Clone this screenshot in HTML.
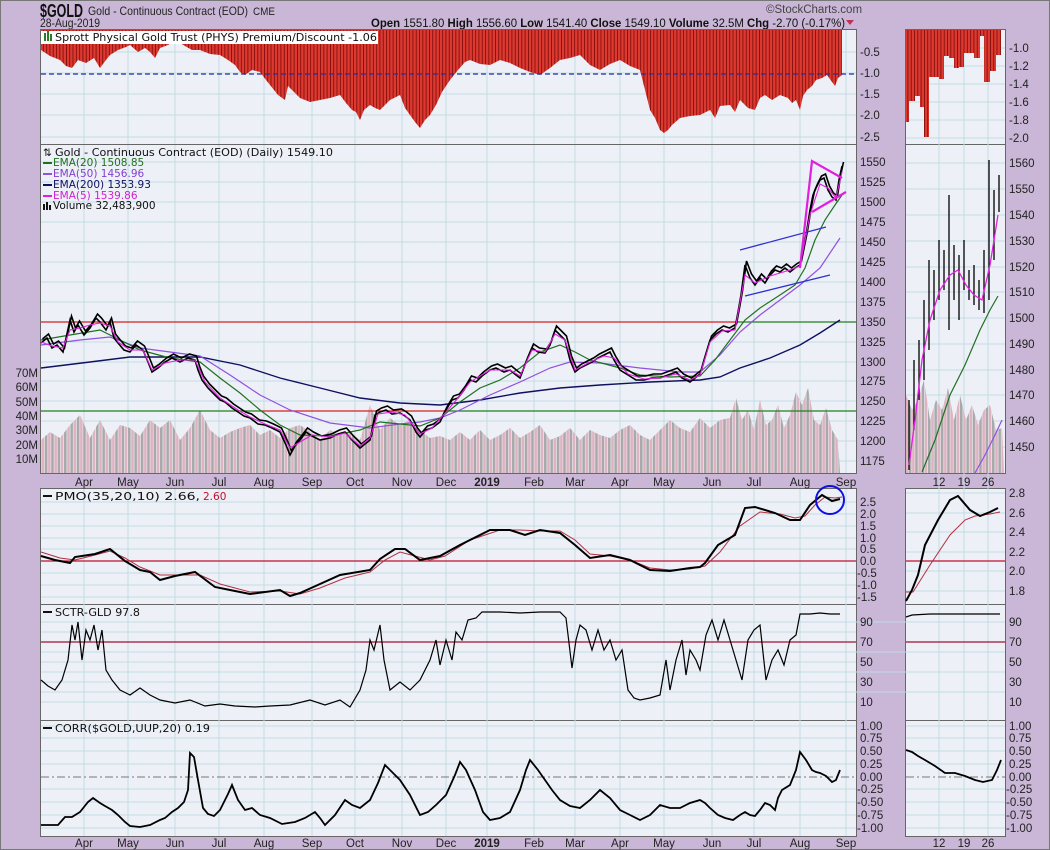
<!DOCTYPE html>
<html><head><meta charset="utf-8"><style>
html,body{margin:0;padding:0;background:#cab7d7;}
svg{display:block;font-family:"Liberation Sans","DejaVu Sans",sans-serif;}
.ax{font-size:11.5px;fill:#222;}
.lg{font-family:"DejaVu Sans",sans-serif;font-size:10.5px;}
</style></head><body>
<svg width="1050" height="850" viewBox="0 0 1050 850" xmlns="http://www.w3.org/2000/svg">
<defs>
<pattern id="red" width="3.3" height="10" patternUnits="userSpaceOnUse"><rect width="3.3" height="10" fill="#dc3a31"/><rect width="0.8" height="10" fill="#7a0808"/></pattern>
<pattern id="vol" width="6.4" height="10" patternUnits="userSpaceOnUse"><rect width="6.4" height="10" fill="#eef0f7"/><rect x="0" width="2.6" height="10" fill="#a9a9ab"/><rect x="3.2" width="2.6" height="10" fill="#dfb2bf"/></pattern>
</defs>
<rect x="0" y="0" width="1050" height="850" fill="#cab7d7"/>
<rect x="0.5" y="0.5" width="1049" height="849" fill="none" stroke="#777" />

<!-- header -->
<text x="40" y="17" font-size="18" font-weight="bold" fill="#111" textLength="43" lengthAdjust="spacingAndGlyphs">$GOLD</text>
<text x="88" y="15" font-size="12" fill="#222" textLength="160" lengthAdjust="spacingAndGlyphs">Gold - Continuous Contract (EOD)</text>
<text x="253" y="15" font-size="11" fill="#222" textLength="22" lengthAdjust="spacingAndGlyphs">CME</text>
<text x="40" y="27" font-size="11.5" fill="#222" textLength="60" lengthAdjust="spacingAndGlyphs">28-Aug-2019</text>
<text x="766" y="13" font-size="11.5" fill="#444">©StockCharts.com</text>
<text x="371" y="27" font-size="11.5" fill="#111" textLength="474" lengthAdjust="spacingAndGlyphs"><tspan font-weight="bold">Open</tspan> 1551.80 <tspan font-weight="bold">High</tspan> 1556.60 <tspan font-weight="bold">Low</tspan> 1541.40 <tspan font-weight="bold">Close</tspan> 1549.10 <tspan font-weight="bold">Volume</tspan> 32.5M <tspan font-weight="bold">Chg</tspan> -2.70 (-0.17%)</text>
<polygon points="846,20 854,20 850,25" fill="#c03050"/>

<!-- panel backgrounds -->
<g fill="#eef0f7" stroke="#666" stroke-width="1">
<rect x="40.5" y="29.5" width="816" height="115"/>
<rect x="40.5" y="144.5" width="816" height="329"/>
<rect x="40.5" y="488.5" width="816" height="116"/>
<rect x="40.5" y="604.5" width="816" height="116"/>
<rect x="40.5" y="720.5" width="816" height="116"/>
<rect x="905.5" y="29.5" width="100" height="115"/>
<rect x="905.5" y="144.5" width="100" height="329"/>
<rect x="905.5" y="488.5" width="100" height="116"/>
<rect x="905.5" y="604.5" width="100" height="116"/>
<rect x="905.5" y="720.5" width="100" height="116"/>
</g>

<!-- vertical grid -->
<g stroke="#c3dbe6" stroke-width="1">
<path d="M84 30V144M128 30V144M175 30V144M219 30V144M264 30V144M312 30V144M355 30V144M402 30V144M446 30V144M487 30V144M534 30V144M575 30V144M620 30V144M664 30V144M712 30V144M754 30V144M800 30V144M846 30V144"/>
<path d="M84 145V473M128 145V473M175 145V473M219 145V473M264 145V473M312 145V473M355 145V473M402 145V473M446 145V473M487 145V473M534 145V473M575 145V473M620 145V473M664 145V473M712 145V473M754 145V473M800 145V473M846 145V473"/>
<path d="M84 489V836M128 489V836M175 489V836M219 489V836M264 489V836M312 489V836M355 489V836M402 489V836M446 489V836M487 489V836M534 489V836M575 489V836M620 489V836M664 489V836M712 489V836M754 489V836M800 489V836M846 489V836"/>
<path d="M939 30V836M964 30V836M988 30V836"/>
<path d="M41 52H856M41 73H856M41 94H856M41 115H856M41 137H856M906 48H1005M906 66H1005M906 84H1005M906 102H1005M906 120H1005M906 138H1005"/>
<path d="M41 162H856M41 182H856M41 202H856M41 222H856M41 242H856M41 262H856M41 282H856M41 302H856M41 322H856M41 342H856M41 362H856M41 381H856M41 401H856M41 421H856M41 441H856M41 461H856"/>
<path d="M906 163H1005M906 189H1005M906 215H1005M906 241H1005M906 267H1005M906 292H1005M906 318H1005M906 344H1005M906 370H1005M906 395H1005M906 421H1005M906 447H1005"/>
<path d="M41 502H856M41 514H856M41 526H856M41 538H856M41 549H856M41 573H856M41 585H856M41 597H856M906 493H1005M906 513H1005M906 532H1005M906 552H1005M906 571H1005M906 591H1005"/>
<path d="M41 622H1005M41 632H856M41 652H1005M41 662H856M41 672H1005M41 682H856M41 692H1005M41 702H856"/>
<path d="M41 726H856M41 738H856M41 751H856M41 764H856M41 789H856M41 802H856M41 815H856M41 828H856M906 726H1005M906 738H1005M906 751H1005M906 764H1005M906 789H1005M906 802H1005M906 815H1005M906 828H1005"/>
</g>

<!-- PHYS histogram -->
<polygon fill="url(#red)" points="41,30 41,50 50,56 60,60 66,66 72,68 78,60 86,63 94,58 100,68 106,60 110,55 118,50 126,47 130,45 138,52 145,48 150,52 155,58 160,48 168,45 175,40 185,46 192,50 200,50 210,54 220,55 228,60 235,65 240,72 245,75 252,70 260,72 266,80 270,85 278,95 285,100 288,86 292,90 300,98 310,102 320,100 330,98 340,95 346,103 352,110 356,112 360,120 364,110 370,105 375,108 380,110 390,100 400,95 405,108 410,115 415,122 420,128 425,120 430,115 436,105 442,92 450,80 458,70 465,62 470,60 480,64 490,65 500,60 510,63 520,68 530,72 540,75 550,68 560,60 570,58 580,55 590,65 600,70 610,64 620,60 630,66 640,70 645,90 650,110 655,118 660,130 664,133 668,130 672,125 680,118 690,116 700,115 710,110 715,118 720,106 730,105 735,112 740,100 748,108 755,110 760,98 765,95 772,100 780,95 788,98 792,103 796,100 800,110 803,96 807,90 812,86 816,80 822,78 827,75 832,82 835,86 838,78 842,75 842,30"/>
<path d="M41 74H856" stroke="#2030a0" stroke-width="1.2" stroke-dasharray="5,3"/>
<polygon fill="url(#red)" points="906,30 906,122 909,122 909,101 915,101 915,96 920,96 920,107 924,107 924,137 929,137 929,77 934,77 934,77 939,77 939,79 944,79 944,56 949,56 949,58 954,58 954,68 959,68 959,67 964,67 964,53 969,53 969,53 974,53 974,58 980,58 980,36 984,36 984,82 990,82 990,71 996,71 996,55 1001,55 1001,30"/>
<rect x="41" y="31" width="337" height="13" fill="#fff"/>
<rect x="44" y="33" width="2" height="8" fill="#2a7a2a"/><rect x="47" y="31" width="2" height="10" fill="#2a7a2a"/><rect x="50" y="34" width="2" height="7" fill="#2a7a2a"/>
<text class="lg" x="55" y="41" fill="#111" textLength="322" lengthAdjust="spacingAndGlyphs">Sprott Physical Gold Trust (PHYS) Premium/Discount -1.06</text>

<!-- volume -->
<polygon fill="url(#vol)" points="41,473 41,440 50,432 60,438 70,425 80,415 90,438 100,420 110,440 120,425 130,428 140,436 150,420 160,428 170,420 180,440 190,428 200,410 210,430 220,438 230,432 240,428 250,425 260,435 270,430 280,438 290,428 300,425 310,432 320,440 330,430 340,435 350,432 360,440 370,405 380,430 390,418 400,425 410,420 420,430 430,438 440,436 450,440 460,432 470,440 480,430 490,440 500,435 510,428 520,438 530,432 540,425 550,440 560,436 570,428 580,440 590,430 600,435 610,438 620,430 630,425 640,435 650,440 660,430 670,420 680,428 690,432 700,418 710,428 720,420 730,418 736,398 742,420 748,410 754,430 760,400 766,425 772,420 778,405 784,428 790,415 796,392 802,405 808,388 814,420 820,425 826,408 832,430 838,440 840,473"/>
<polygon fill="url(#vol)" points="906,473 906,395 912,410 918,400 924,380 930,420 936,400 942,410 948,388 954,420 960,395 966,420 972,405 978,425 984,410 990,405 996,430 1002,428 1004,473"/>

<!-- horizontal S/R lines -->
<path d="M41 322H737" stroke="#d42020" stroke-width="1.2"/>
<path d="M737 322H856" stroke="#208020" stroke-width="1.2"/>
<path d="M41 411H262M447 411H856" stroke="#208020" stroke-width="1.2"/>
<path d="M262 411H447" stroke="#d42020" stroke-width="1.2"/>

<!-- EMAs -->
<polyline fill="none" stroke="#101060" stroke-width="1.4" points="41,368 90,362 130,357 200,357 240,365 280,378 320,388 360,398 400,403 440,405 480,400 520,393 560,388 600,385 650,382 700,380 720,377 740,368 770,358 800,345 820,333 840,320"/>
<polyline fill="none" stroke="#9050e0" stroke-width="1.2" points="41,345 80,340 110,337 140,348 170,352 200,356 230,375 260,395 290,410 330,423 370,428 400,424 420,422 440,418 460,410 490,395 520,382 550,368 570,362 600,363 640,368 680,372 700,372 720,355 740,332 760,315 780,300 800,285 820,268 840,238"/>
<polyline fill="none" stroke="#207020" stroke-width="1.2" points="41,340 70,335 100,330 120,340 140,350 170,358 200,362 220,378 240,393 260,410 280,425 300,435 330,436 360,430 380,422 400,424 420,426 440,418 460,402 480,388 500,380 520,368 540,352 560,345 575,352 590,360 620,368 640,375 670,377 700,376 715,360 730,340 745,320 760,308 780,295 795,285 805,268 815,240 825,220 835,205 842,195"/>
<!-- price (bars approximated) -->
<g id="pr">
<polyline fill="none" stroke="#000" stroke-width="1.6" points="41,343 47,338 52,348 57,345 63,352 70,320 74,332 78,325 84,335 90,328 96,318 100,322 106,330 110,322 114,338 118,343 124,350 130,352 136,345 143,350 148,362 152,372 158,368 165,362 172,358 180,362 188,358 195,360 198,370 202,380 208,388 215,395 220,400 225,402 232,408 238,412 244,416 250,418 258,424 265,425 272,428 280,432 286,445 290,455 295,446 300,440 306,432 312,436 320,440 330,438 338,434 345,432 352,440 360,448 365,444 370,440 375,415 380,412 386,410 392,414 400,413 405,416 410,420 416,432 420,437 426,430 432,428 440,422 446,410 452,400 458,398 464,390 470,380 476,382 482,376 490,370 496,368 504,372 510,370 516,375 520,378 526,362 532,348 538,352 545,353 550,345 555,330 560,335 565,340 570,360 575,372 580,368 586,365 592,362 598,358 604,355 610,352 614,360 620,370 628,375 636,380 644,380 652,378 660,378 668,375 676,372 682,378 690,382 695,378 700,374 704,360 710,340 716,334 722,330 728,332 735,328 738,312 741,295 745,265 750,278 755,285 760,278 765,283 770,275 775,270 780,272 785,268 790,272 795,268 800,265 803,250 806,235 810,210 813,195 816,188 820,180 824,178 828,190 832,197 836,200 839,180 842,166"/>
</g>
<use href="#pr" transform="translate(1.5,-4)"/>
<polyline fill="none" stroke="#e020e0" stroke-width="1.1" points="41,342 52,346 63,348 70,330 80,328 90,325 100,323 110,326 118,342 130,350 143,350 152,370 165,363 180,360 195,360 205,382 220,398 238,410 250,417 265,424 280,430 290,448 300,442 312,435 330,437 345,433 360,446 370,438 378,414 392,412 405,415 420,434 432,428 446,412 458,398 470,382 490,370 510,370 520,376 532,350 545,352 555,334 565,340 575,370 590,362 604,356 614,358 628,374 644,379 660,378 676,374 690,380 700,375 710,342 722,331 735,330 745,275 755,283 770,276 790,270 800,266 810,215 820,184 828,188 836,198 842,172"/>
<path d="M740 250L826 227M745 296L830 275" stroke="#3030d0" stroke-width="1.3"/>
<path d="M800 268L812 161L842 178M812 212L846 192" stroke="#e020e0" stroke-width="2.2" fill="none"/>

<!-- side price -->
<path d="M909 470V400M914 430V360M919 400V340M924 380V300M929 350V260M934 320V270M939 300V240M944 290V250M949 330V195M954 300V245M959 320V255M964 290V240M969 300V270M974 305V265M979 310V280M984 313V250M989 300V160M994 260V190M999 212V175" stroke="#000" stroke-width="1.3"/>
<polyline fill="none" stroke="#e020e0" stroke-width="1.3" points="909,465 915,420 922,360 930,320 940,290 950,275 958,270 966,285 974,295 982,300 990,265 998,215"/>
<polyline fill="none" stroke="#207020" stroke-width="1.2" points="922,472 935,440 950,395 965,365 980,330 990,310 998,296"/>
<polyline fill="none" stroke="#9050e0" stroke-width="1.2" points="975,473 985,455 995,435 1002,420"/>

<!-- legend price -->
<text class="lg" x="43" y="156" fill="#111" font-size="9">⇅</text>
<text class="lg" x="55" y="156" fill="#111" textLength="278" lengthAdjust="spacingAndGlyphs">Gold - Continuous Contract (EOD) (Daily) 1549.10</text>
<rect x="43" y="162" width="9" height="2" fill="#207020"/><text class="lg" x="53" y="166" fill="#207020" font-size="10">EMA(20) 1508.85</text>
<rect x="43" y="173" width="9" height="2" fill="#9050e0"/><text class="lg" x="53" y="177" fill="#8040d0" font-size="10">EMA(50) 1456.96</text>
<rect x="43" y="184" width="9" height="2" fill="#101060"/><text class="lg" x="53" y="188" fill="#101060" font-size="10">EMA(200) 1353.93</text>
<rect x="43" y="195" width="9" height="2" fill="#e020e0"/><text class="lg" x="53" y="199" fill="#d020d0" font-size="10">EMA(5) 1539.86</text>
<rect x="43" y="204" width="2" height="6" fill="#111"/><rect x="46" y="202" width="2" height="8" fill="#111"/><rect x="49" y="205" width="2" height="5" fill="#111"/>
<text class="lg" x="53" y="209" fill="#111" font-size="10">Volume 32,483,900</text>

<!-- PMO -->
<path d="M41 561H856M906 561H1005" stroke="#c01030" stroke-width="1.2"/>
<polyline fill="none" stroke="#b03040" stroke-width="1" points="41,552 60,558 75,560 95,555 110,551 125,558 140,567 160,575 180,575 200,575 220,584 250,592 280,591 300,594 320,588 345,578 370,572 385,560 400,552 415,556 430,560 445,556 470,540 500,530 520,530 540,531 560,531 575,540 590,554 610,556 630,560 650,568 670,570 690,569 705,566 720,552 740,526 760,512 780,514 795,518 805,516 815,505 825,497 835,498 842,497"/>
<polyline fill="none" stroke="#000" stroke-width="2" points="41,556 55,560 70,563 75,557 95,554 110,549 125,561 140,570 150,572 160,580 175,576 195,572 215,587 230,590 250,594 280,590 290,596 300,593 320,584 340,575 370,570 380,559 395,549 405,549 420,560 440,556 460,545 490,530 510,530 525,535 540,530 560,533 575,545 590,558 610,555 630,560 650,570 670,571 690,568 700,567 705,563 718,545 735,535 745,508 755,507 775,513 790,520 800,520 810,505 822,495 832,501 840,499"/>
<circle cx="830" cy="500" r="14" fill="none" stroke="#1010e0" stroke-width="2"/>
<polyline fill="none" stroke="#b03040" stroke-width="1" points="906,592 913,592 930,565 950,535 965,520 975,516 990,514 1000,512"/>
<polyline fill="none" stroke="#000" stroke-width="2" points="906,601 912,590 918,575 925,545 938,520 950,500 958,496 970,510 980,516 990,512 998,508"/>
<rect x="43" y="495" width="9" height="2" fill="#111"/>
<text class="lg" x="55" y="500" fill="#111" textLength="145" lengthAdjust="spacingAndGlyphs">PMO(35,20,10) 2.66,</text>
<text class="lg" x="203" y="500" fill="#c01030">2.60</text>

<!-- SCTR -->
<path d="M41 642H856M906 642H1005" stroke="#a01030" stroke-width="1.2"/>
<polyline fill="none" stroke="#000" stroke-width="1.2" points="41,680 48,686 55,690 62,680 68,660 72,625 75,640 78,622 82,660 86,630 90,640 94,625 98,650 102,630 106,670 112,680 120,690 130,695 140,688 150,695 160,700 175,703 190,700 205,706 220,704 235,706 255,707 270,706 290,705 310,700 325,705 340,700 350,707 360,690 366,670 370,640 374,650 380,625 384,660 390,690 400,682 410,690 420,680 430,660 436,640 440,665 446,640 452,660 456,632 462,640 468,620 476,618 482,612 500,612 520,613 540,612 560,612 566,618 572,668 576,640 580,625 586,630 592,650 598,630 604,650 610,640 616,660 622,650 628,690 634,698 640,700 650,698 660,695 666,660 670,690 676,660 682,640 686,675 690,650 696,660 700,670 706,635 712,620 718,640 724,620 730,640 736,660 742,680 748,640 754,630 760,625 766,680 772,660 778,650 784,665 790,640 796,635 800,614 810,614 820,613 830,614 840,614"/>
<polyline fill="none" stroke="#000" stroke-width="1.2" points="906,617 912,615 930,614 950,614 970,614 990,614 1000,614"/>
<rect x="43" y="611" width="9" height="2" fill="#111"/>
<text class="lg" x="55" y="616" fill="#111" textLength="85" lengthAdjust="spacingAndGlyphs">SCTR-GLD 97.8</text>

<!-- CORR -->
<path d="M41 777H856M906 777H1005" stroke="#777" stroke-width="1" stroke-dasharray="8,3,2,3"/>
<polyline fill="none" stroke="#000" stroke-width="1.8" points="41,825 58,825 65,817 72,817 80,812 88,802 93,798 100,803 105,806 112,810 118,815 125,822 130,826 140,827 150,825 160,820 165,818 172,812 178,808 184,802 188,790 190,753 194,757 198,780 203,808 208,814 214,816 220,810 228,794 232,785 238,800 245,810 252,808 260,815 270,818 282,824 295,822 305,818 315,812 320,818 325,825 335,815 345,800 352,805 360,808 370,800 378,783 385,765 392,772 400,780 410,795 420,815 428,812 436,805 446,795 455,775 460,762 466,770 475,790 483,812 490,820 500,818 510,812 520,790 526,770 530,760 538,770 545,780 552,790 560,800 570,806 580,808 590,800 600,790 610,798 620,810 630,815 640,820 650,815 660,805 670,808 680,808 690,803 700,800 705,803 710,808 718,815 725,818 733,820 740,815 745,812 750,815 755,816 760,810 765,803 770,805 775,810 778,798 782,790 790,785 796,770 800,752 806,760 812,770 816,772 820,773 826,776 832,782 836,780 840,770"/>
<polyline fill="none" stroke="#000" stroke-width="1.8" points="906,750 912,752 918,756 925,760 935,766 945,773 955,773 965,776 975,780 983,782 992,780 997,770 1001,760"/>
<rect x="43" y="727" width="9" height="2" fill="#111"/>
<text class="lg" x="55" y="732" fill="#111" textLength="155" lengthAdjust="spacingAndGlyphs">CORR($GOLD,UUP,20) 0.19</text>

<!-- axis labels -->
<g class="ax">
<text x="860" y="56">-0.5</text><text x="860" y="77">-1.0</text><text x="860" y="98">-1.5</text><text x="860" y="119">-2.0</text><text x="860" y="141">-2.5</text>
<text x="1009" y="52">-1.0</text><text x="1009" y="70">-1.2</text><text x="1009" y="88">-1.4</text><text x="1009" y="106">-1.6</text><text x="1009" y="124">-1.8</text><text x="1009" y="142">-2.0</text>
<text x="860" y="166">1550</text><text x="860" y="186">1525</text><text x="860" y="206">1500</text><text x="860" y="226">1475</text><text x="860" y="246">1450</text><text x="860" y="266">1425</text><text x="860" y="286">1400</text><text x="860" y="306">1375</text><text x="860" y="326">1350</text><text x="860" y="346">1325</text><text x="860" y="366">1300</text><text x="860" y="385">1275</text><text x="860" y="405">1250</text><text x="860" y="425">1225</text><text x="860" y="445">1200</text><text x="860" y="465">1175</text>
<text x="1009" y="167">1560</text><text x="1009" y="193">1550</text><text x="1009" y="219">1540</text><text x="1009" y="245">1530</text><text x="1009" y="271">1520</text><text x="1009" y="296">1510</text><text x="1009" y="322">1500</text><text x="1009" y="348">1490</text><text x="1009" y="374">1480</text><text x="1009" y="399">1470</text><text x="1009" y="425">1460</text><text x="1009" y="451">1450</text>
<g text-anchor="end"><text x="38" y="377">70M</text><text x="38" y="391">60M</text><text x="38" y="406">50M</text><text x="38" y="420">40M</text><text x="38" y="434">30M</text><text x="38" y="449">20M</text><text x="38" y="463">10M</text></g>
<text x="860" y="506">2.5</text><text x="860" y="518">2.0</text><text x="860" y="530">1.5</text><text x="860" y="542">1.0</text><text x="860" y="553">0.5</text><text x="860" y="565">0.0</text><text x="857" y="577">-0.5</text><text x="857" y="589">-1.0</text><text x="857" y="601">-1.5</text>
<text x="1009" y="497">2.8</text><text x="1009" y="517">2.6</text><text x="1009" y="536">2.4</text><text x="1009" y="556">2.2</text><text x="1009" y="575">2.0</text><text x="1009" y="595">1.8</text>
<text x="860" y="626">90</text><text x="860" y="646">70</text><text x="860" y="666">50</text><text x="860" y="686">30</text><text x="860" y="706">10</text>
<text x="1009" y="626">90</text><text x="1009" y="646">70</text><text x="1009" y="666">50</text><text x="1009" y="686">30</text><text x="1009" y="706">10</text>
<text x="860" y="730">1.00</text><text x="860" y="742">0.75</text><text x="860" y="755">0.50</text><text x="860" y="768">0.25</text><text x="860" y="781">0.00</text><text x="857" y="793">-0.25</text><text x="857" y="806">-0.50</text><text x="857" y="819">-0.75</text><text x="857" y="832">-1.00</text>
<text x="1009" y="730">1.00</text><text x="1009" y="742">0.75</text><text x="1009" y="755">0.50</text><text x="1009" y="768">0.25</text><text x="1009" y="781">0.00</text><text x="1006" y="793">-0.25</text><text x="1006" y="806">-0.50</text><text x="1006" y="819">-0.75</text><text x="1006" y="832">-1.00</text>
<g text-anchor="middle">
<text x="84" y="486">Apr</text><text x="128" y="486">May</text><text x="175" y="486">Jun</text><text x="219" y="486">Jul</text><text x="264" y="486">Aug</text><text x="312" y="486">Sep</text><text x="355" y="486">Oct</text><text x="402" y="486">Nov</text><text x="446" y="486">Dec</text><text x="487" y="486" font-weight="bold">2019</text><text x="534" y="486">Feb</text><text x="575" y="486">Mar</text><text x="620" y="486">Apr</text><text x="664" y="486">May</text><text x="712" y="486">Jun</text><text x="754" y="486">Jul</text><text x="800" y="486">Aug</text><text x="846" y="486">Sep</text>
<text x="939" y="486">12</text><text x="964" y="486">19</text><text x="988" y="486">26</text>
<text x="84" y="847">Apr</text><text x="128" y="847">May</text><text x="175" y="847">Jun</text><text x="219" y="847">Jul</text><text x="264" y="847">Aug</text><text x="312" y="847">Sep</text><text x="355" y="847">Oct</text><text x="402" y="847">Nov</text><text x="446" y="847">Dec</text><text x="487" y="847" font-weight="bold">2019</text><text x="534" y="847">Feb</text><text x="575" y="847">Mar</text><text x="620" y="847">Apr</text><text x="664" y="847">May</text><text x="712" y="847">Jun</text><text x="754" y="847">Jul</text><text x="800" y="847">Aug</text><text x="846" y="847">Sep</text>
<text x="939" y="847">12</text><text x="964" y="847">19</text><text x="988" y="847">26</text>
</g>
</g>
</svg>
</body></html>
